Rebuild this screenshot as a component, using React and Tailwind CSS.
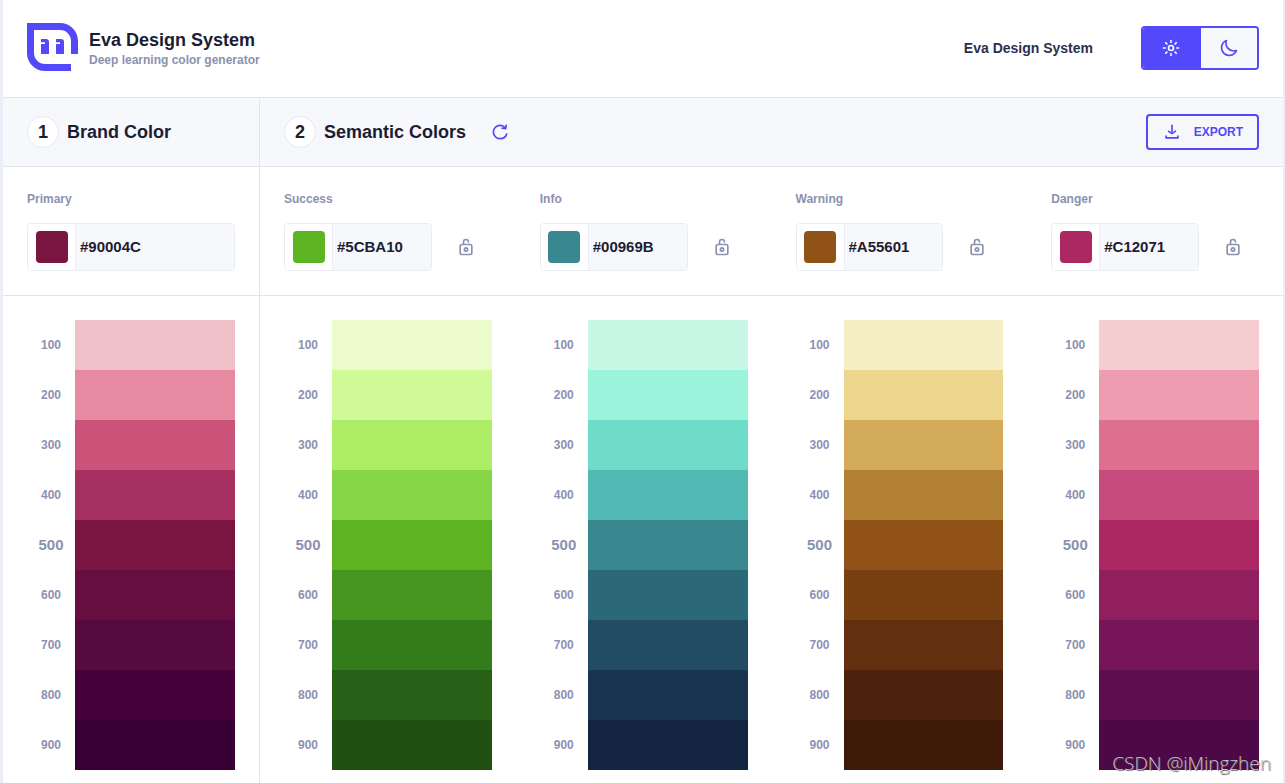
import { useState } from 'react';

const primary = {
  name: 'Primary',
  hex: '#90004C',
  shades: ['#F0C0C8', '#E58AA0', '#CB5278', '#A73062', '#7A1440', '#670E40', '#560A3F', '#46013B', '#390036'],
};

const semantic = [
  {
    name: 'Success',
    hex: '#5CBA10',
    shades: ['#EBFBCB', '#D0FA98', '#ADED66', '#86D546', '#5CB423', '#46961F', '#347B1A', '#276016', '#1F4F11'],
  },
  {
    name: 'Info',
    hex: '#00969B',
    shades: ['#C9F7E5', '#9BF3DB', '#6FDCCA', '#52B9B4', '#39888F', '#2B6878', '#224B64', '#193450', '#142542'],
  },
  {
    name: 'Warning',
    hex: '#A55601',
    shades: ['#F5EDC4', '#EDD68E', '#D4AC59', '#B38134', '#905216', '#783F11', '#622F0F', '#4D220C', '#3F1A09'],
  },
  {
    name: 'Danger',
    hex: '#C12071',
    shades: ['#F5CCD0', '#EE9DB0', '#DD708F', '#C74B7D', '#AB2862', '#911E5F', '#771559', '#5E0D4E', '#4C0847'],
  },
];

function Logo() {
  return (
    <svg width="51" height="50" viewBox="0 0 51 50" fill="#5348fa" aria-hidden="true">
      <path d="M0 0H33A18 18 0 0 1 51 18V31H44V18A11 11 0 0 0 33 7H7V30A11 11 0 0 0 18 41H44V48H18A18 18 0 0 1 0 30Z" />
      <path d="M14 16H19A3 3 0 0 1 22 19V31H14V21H18V19.3H14Z" />
      <path d="M29 16H34A3 3 0 0 1 37 19V31H29V21H33V19.3H29Z" />
    </svg>
  );
}

function Icon({ children }) {
  return (
    <svg width="20" height="20" viewBox="0 0 24 24" fill="currentColor" aria-hidden="true">
      {children}
    </svg>
  );
}

const SunIcon = () => (
  <Icon>
    <g fill="none" stroke="currentColor" strokeWidth="2" strokeLinecap="round">
      <circle cx="12" cy="12" r="3" />
      <path d="M12 3v2M12 19v2M3 12h2M19 12h2M5.7 5.7l1.3 1.3M17 17l1.3 1.3M5.7 18.3L7 17M17 7l1.3-1.3" />
    </g>
  </Icon>
);

const MoonIcon = () => (
  <Icon>
    <path d="M12.3 22h-.1a10.31 10.31 0 0 1-7.34-3.15 10.46 10.46 0 0 1-.26-14 10.13 10.13 0 0 1 4-2.74 1 1 0 0 1 1.06.22 1 1 0 0 1 .24 1 8.4 8.4 0 0 0 1.94 8.81 8.47 8.47 0 0 0 8.83 1.94 1 1 0 0 1 1.27 1.29A10.16 10.16 0 0 1 19.6 19a10.28 10.28 0 0 1-7.3 3zM7.46 4.92a7.93 7.93 0 0 0-1.37 1.22 8.44 8.44 0 0 0 .2 11.32A8.29 8.29 0 0 0 12.22 20h.08a8.34 8.34 0 0 0 6.78-3.49A10.37 10.37 0 0 1 7.46 4.92z" />
  </Icon>
);

const RefreshIcon = () => (
  <Icon>
    <path d="M20.3 13.43a1 1 0 0 0-1.25.65A7.14 7.14 0 0 1 12.18 19 7.1 7.1 0 0 1 5 12a7.1 7.1 0 0 1 7.18-7 7.26 7.26 0 0 1 4.65 1.67l-2.17-.36a1 1 0 0 0-1.15.83 1 1 0 0 0 .82 1.15l4.24.7h.17a1 1 0 0 0 .34-.06.33.33 0 0 0 .1-.06.78.78 0 0 0 .2-.11l.09-.11c0-.05.09-.09.13-.15s0-.1.05-.14a1.34 1.34 0 0 0 .07-.18l.75-4a1 1 0 0 0-2-.38l-.27 1.45A9.21 9.21 0 0 0 12.18 3 9.1 9.1 0 0 0 3 12a9.1 9.1 0 0 0 9.18 9A9.12 9.12 0 0 0 21 14.68a1 1 0 0 0-.7-1.25z" />
  </Icon>
);

const DownloadIcon = () => (
  <Icon>
    <rect x="4" y="18" width="16" height="2" rx="1" />
    <rect x="4" y="16" width="2" height="4" rx="1" />
    <rect x="18" y="16" width="2" height="4" rx="1" />
    <path d="M12 15a1 1 0 0 1-.58-.18l-4-2.82a1 1 0 0 1-.24-1.39 1 1 0 0 1 1.4-.24L12 12.76l3.4-2.56a1 1 0 0 1 1.2 1.6l-4 3a1 1 0 0 1-.6.2z" />
    <path d="M12 13a1 1 0 0 1-1-1V4a1 1 0 0 1 2 0v8a1 1 0 0 1-1 1z" />
  </Icon>
);

const UnlockIcon = () => (
  <Icon>
    <path d="M17 8h-7V6a2 2 0 0 1 4 0 1 1 0 0 0 2 0 4 4 0 0 0-8 0v2H7a3 3 0 0 0-3 3v8a3 3 0 0 0 3 3h10a3 3 0 0 0 3-3v-8a3 3 0 0 0-3-3zm1 11a1 1 0 0 1-1 1H7a1 1 0 0 1-1-1v-8a1 1 0 0 1 1-1h10a1 1 0 0 1 1 1z" />
    <path d="M12 12a3 3 0 1 0 3 3 3 3 0 0 0-3-3zm0 4a1 1 0 1 1 1-1 1 1 0 0 1-1 1z" />
  </Icon>
);

function Step({ number, title }) {
  return (
    <div className="flex items-center gap-2">
      <span className="flex size-8 items-center justify-center rounded-full border border-[#e4e9f2] bg-white text-lg font-bold">
        {number}
      </span>
      <h2 className="text-lg font-bold">{title}</h2>
    </div>
  );
}

function ColorField({ color, lockable }) {
  const [value, setValue] = useState(color.hex);
  const id = `color-${color.name.toLowerCase()}`;

  return (
    <div className="p-6">
      <label htmlFor={id} className="mb-4 block text-xs font-bold text-[#8c91b0]">
        {color.name}
      </label>
      <div className="flex">
        <div className="flex h-12 min-w-0 flex-1 overflow-hidden rounded border border-[#e9ecf5]">
          <div className="flex w-12 shrink-0 items-center justify-center border-r border-[#e9ecf5] bg-white">
            <div className="size-8 rounded" style={{ backgroundColor: color.shades[4] }} />
          </div>
          <input
            id={id}
            value={value}
            onChange={(e) => setValue(e.target.value)}
            className="w-full min-w-0 bg-[#f7f8fc] px-1 text-[15px] font-bold outline-none"
          />
        </div>
        {lockable && (
          <button aria-label={`Lock ${color.name}`} className="flex w-[60px] shrink-0 items-center justify-center pl-2 text-[#8c91b0]">
            <UnlockIcon />
          </button>
        )}
      </div>
    </div>
  );
}

function Palette({ color }) {
  return (
    <div className="px-6 pt-6">
      {color.shades.map((shade, i) => (
        <div key={shade} className="flex h-[50px] items-center">
          <span className={`w-12 shrink-0 text-center font-bold text-[#8c91b0] ${i === 4 ? 'text-[15px]' : 'text-xs'}`}>
            {(i + 1) * 100}
          </span>
          <div className="h-full flex-1" style={{ backgroundColor: shade }} />
        </div>
      ))}
    </div>
  );
}

export default function App() {
  const [theme, setTheme] = useState('light');

  const themeButton = (name) =>
    theme === name ? 'bg-[#5348fa] text-white' : 'bg-[#f7f8fc] text-[#5348fa]';

  return (
    <div className="relative flex min-h-screen flex-col border-r-2 border-l-3 border-[#ebeef7] bg-white font-['Liberation_Sans',Arial,sans-serif] text-[#1c1c33]">
      <header className="flex items-center justify-between border-b border-[#e2e4ee] px-6 pt-[23px] pb-6">
        <div className="flex items-center gap-[11px]">
          <Logo />
          <div>
            <h1 className="text-lg leading-6 font-bold">Eva Design System</h1>
            <p className="text-xs font-bold text-[#8c91b0]">Deep learning color generator</p>
          </div>
        </div>
        <div className="flex items-center gap-12">
          <a href="#" className="text-sm font-bold text-[#2d2f4e]">Eva Design System</a>
          <div className="flex h-11 overflow-hidden rounded border-2 border-[#5348fa]">
            <button aria-label="Light theme" onClick={() => setTheme('light')} className={`flex w-[58px] items-center justify-center pr-[2px] ${themeButton('light')}`}>
              <SunIcon />
            </button>
            <button aria-label="Dark theme" onClick={() => setTheme('dark')} className={`flex w-14 items-center justify-center ${themeButton('dark')}`}>
              <MoonIcon />
            </button>
          </div>
        </div>
      </header>

      <div className="flex border-b border-[#e2e4ee] bg-[#f7f8fc]">
        <div className="box-content flex w-1/5 items-center border-r border-[#e2e4ee]">
          <div className="px-6">
            <Step number={1} title="Brand Color" />
          </div>
        </div>
        <div className="flex flex-1 items-center px-6 py-4">
          <Step number={2} title="Semantic Colors" />
          <button aria-label="Regenerate colors" className="ml-6 text-[#5348fa]">
            <RefreshIcon />
          </button>
          <button className="ml-auto flex h-9 items-center gap-3 rounded border-2 border-[#5348fa] px-[14px] text-xs font-bold text-[#5348fa]">
            <DownloadIcon />
            EXPORT
          </button>
        </div>
      </div>

      <div className="flex border-b border-[#e2e4ee]">
        <div className="box-content w-1/5 border-r border-[#e2e4ee]">
          <ColorField color={primary} />
        </div>
        <div className="grid flex-1 grid-cols-4">
          {semantic.map((color) => (
            <ColorField key={color.name} color={color} lockable />
          ))}
        </div>
      </div>

      <div className="flex flex-1">
        <div className="box-content w-1/5 border-r border-[#e2e4ee]">
          <Palette color={primary} />
        </div>
        <div className="grid flex-1 grid-cols-4">
          {semantic.map((color) => (
            <Palette key={color.name} color={color} />
          ))}
        </div>
      </div>

      <span className="absolute right-3 bottom-2 font-['Open_Sans',sans-serif] text-[19px] leading-6 font-light text-[#c9c3cb] [text-shadow:1px_1px_1px_#555]">
        CSDN @iMingzhen
      </span>
    </div>
  );
}
